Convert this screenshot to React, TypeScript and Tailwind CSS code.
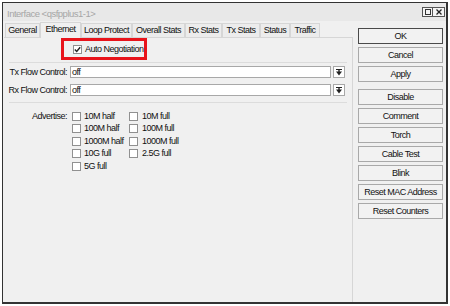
import React from 'react';

const TABS = [
  { label: 'General', w: 'w-[35px]' },
  { label: 'Ethernet', w: 'w-[41px]', active: true },
  { label: 'Loop Protect', w: 'w-[51px]' },
  { label: 'Overall Stats', w: 'w-[53px]' },
  { label: 'Rx Stats', w: 'w-[37px]' },
  { label: 'Tx Stats', w: 'w-[38px]' },
  { label: 'Status', w: 'w-[30px]' },
  { label: 'Traffic', w: 'w-[30px]' },
];

const ADVERTISE: [string, string | null][] = [
  ['10M half', '10M full'],
  ['100M half', '100M full'],
  ['1000M half', '1000M full'],
  ['10G full', '2.5G full'],
  ['5G full', null],
];

const Check = ({ checked }: { checked?: boolean }) => (
  <span className="w-[9px] h-[9px] shrink-0 border border-[#909090] bg-white flex items-center justify-center">
    {checked && (
      <svg width="7" height="7" viewBox="0 0 7 7">
        <path d="M0.8 3.6 L2.7 5.5 L6.2 1.2" fill="none" stroke="#222" strokeWidth="1.4" />
      </svg>
    )}
  </span>
);

const DropButton = () => (
  <div className="w-[12px] h-[12px] border border-[#a8a8a8] bg-white flex items-center justify-center">
    <svg width="6" height="7" viewBox="0 0 6 7">
      <rect x="0" y="0" width="6" height="1" fill="#222" />
      <path d="M0 2.5 H6 L3 6.5 Z" fill="#222" />
      <rect x="2.3" y="1" width="1.4" height="2" fill="#222" />
    </svg>
  </div>
);

const FlowRow = ({ label }: { label: string }) => (
  <div className="flex items-center h-[12px]">
    <span className="w-[64px] text-right pr-[1px]">{label}</span>
    <div className="ml-[2px] w-[261px] h-[12px] border border-[#a8a8a8] bg-white flex items-center pl-[1px] leading-none">
      off
    </div>
    <div className="ml-[2px]">
      <DropButton />
    </div>
  </div>
);

const Btn = ({ label, primary, className }: { label: string; primary?: boolean; className?: string }) => (
  <div
    className={`w-[85px] h-[16px] flex items-center justify-center bg-[#f2f2f2] border ${
      primary ? 'border-[#4a4a4a]' : 'border-[#a9a9a9]'
    } ${className ?? ''}`}
  >
    {label}
  </div>
);

export default function App() {
  return (
    <div className="w-[450px] h-[306px] bg-white pt-[2px] pl-[2px] font-['Liberation_Sans',Arial,sans-serif] text-[9px] tracking-[-0.5px] whitespace-nowrap text-[#111] leading-none">
      <div className="w-[446px] h-[302px] border-l border-t border-r-2 border-b-2 border-[#333] bg-[#f0f0f0] flex flex-col">
        {/* title bar */}
        <div className="h-[18px] bg-[#e8e8e8] flex items-center pl-[4px] pr-[1px]">
          <span className="text-[#a6a6a6] text-[9.5px] mt-[4px]">Interface &lt;qsfpplus1-1&gt;</span>
          <div className="ml-auto flex">
            <div className="w-[11px] h-[10px] border border-[#555] bg-[#f4f4f4] flex items-center justify-center">
              <span className="w-[6px] h-[6px] border border-[#333]" />
            </div>
            <div className="w-[12px] h-[10px] border border-l-0 border-[#555] bg-[#f4f4f4] flex items-center justify-center">
              <svg width="6" height="6" viewBox="0 0 6 6">
                <path d="M0.5 0.5 L5.5 5.5 M5.5 0.5 L0.5 5.5" stroke="#222" strokeWidth="1.3" />
              </svg>
            </div>
          </div>
        </div>

        <div className="flex flex-1">
          {/* left: tabs + panel */}
          <div className="w-[350px] flex flex-col">
            <div className="flex items-end h-[16px] pl-[2px]">
              {TABS.map((t) => (
                <div
                  key={t.label}
                  className={`${t.w} flex items-center justify-center border border-b-0 border-[#d6d6d6] ${
                    t.active ? 'h-[16px] bg-[#f0f0f0] relative -mb-px pb-[2px]' : 'h-[14px] bg-[#ececec]'
                  }`}
                >
                  {t.label}
                </div>
              ))}
            </div>
            <div className="flex-1 border-t border-r border-[#d6d6d6] ml-px">
              <div className="pl-[57px]">
                <div className="w-[86px] h-[22px] border-[3px] border-[#e8141b] flex items-center pl-[9px] gap-[3px]">
                  <Check checked />
                  <span>Auto Negotiation</span>
                </div>
              </div>
              <div className="h-px bg-[#dcdcdc] mx-[5px] mt-[2px]" />

              <div className="flex flex-col gap-[6px] mt-[3px]">
                <FlowRow label="Tx Flow Control:" />
                <FlowRow label="Rx Flow Control:" />
              </div>
              <div className="h-px bg-[#dcdcdc] mx-[5px] mt-[6px]" />

              <div className="flex mt-[7px]">
                <span className="w-[63px] text-right h-[12.5px] flex items-center justify-end">Advertise:</span>
                <div className="ml-[5px] flex flex-col">
                  {ADVERTISE.map(([a, b]) => (
                    <div key={a} className="flex h-[12.5px] items-center">
                      <div className="w-[57px] flex items-center gap-[3px]">
                        <Check />
                        <span>{a}</span>
                      </div>
                      {b && (
                        <div className="flex items-center gap-[4px]">
                          <Check />
                          <span>{b}</span>
                        </div>
                      )}
                    </div>
                  ))}
                </div>
              </div>
            </div>
          </div>

          {/* right: buttons */}
          <div className="flex flex-col gap-[3px] pl-[5px] pt-[7px]">
            <Btn label="OK" primary />
            <Btn label="Cancel" />
            <Btn label="Apply" />
            <Btn label="Disable" className="mt-[4px]" />
            <Btn label="Comment" />
            <Btn label="Torch" />
            <Btn label="Cable Test" />
            <Btn label="Blink" />
            <Btn label="Reset MAC Address" />
            <Btn label="Reset Counters" />
          </div>
        </div>
      </div>
    </div>
  );
}
